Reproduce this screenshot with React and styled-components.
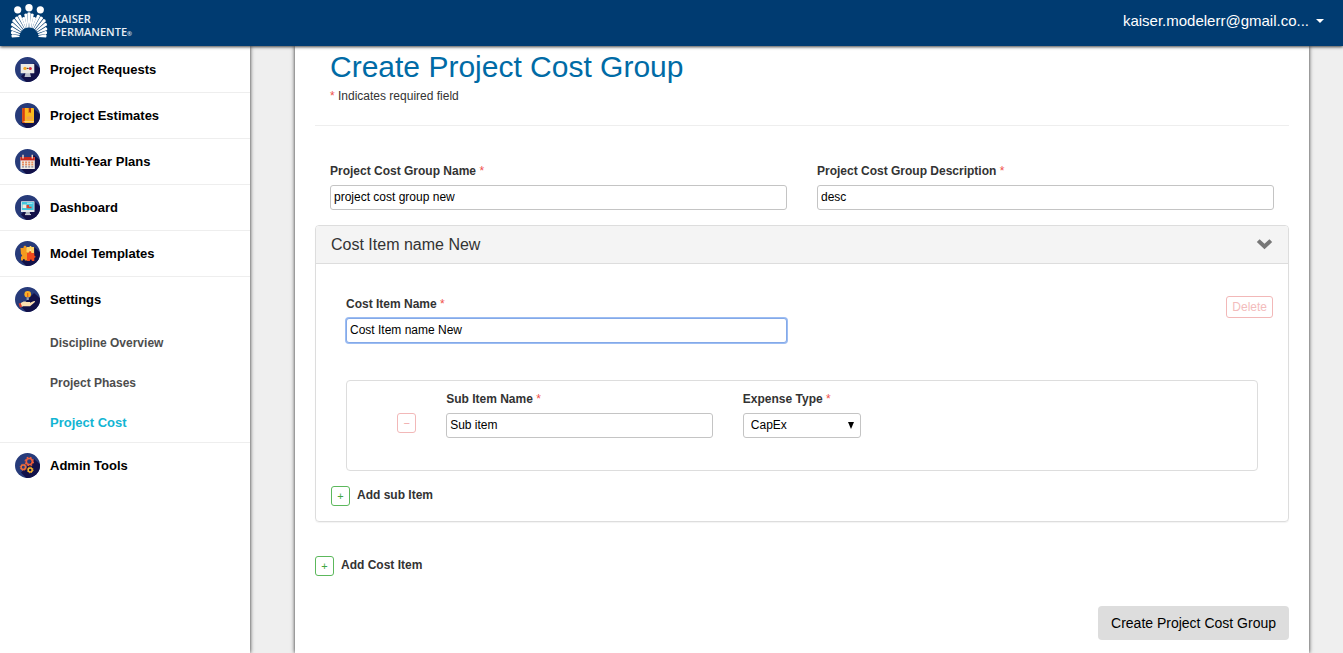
import React, { useState } from "react";
import styled, { createGlobalStyle, css } from "styled-components";

const GlobalStyle = createGlobalStyle`
  *, *::before, *::after { box-sizing: border-box; }
  body {
    margin: 0;
    background: #efefef;
    color: #333;
    font-family: "Liberation Sans", Arial, sans-serif;
    font-size: 12px;
    line-height: 16px;
  }
  button, input, select { font-family: inherit; }
`;

const Page = styled.div`
  display: flex;
  flex-direction: column;
  min-height: 100vh;
`;

const TopBar = styled.header`
  position: relative;
  z-index: 2;
  display: flex;
  align-items: center;
  justify-content: space-between;
  height: 46px;
  padding: 0 19px 0 10px;
  background: #003b71;
  box-shadow: 0 1px 3px rgba(0, 0, 0, 0.75);
`;

const Brand = styled.a`
  display: flex;
  align-items: center;
  gap: 6px;
  color: #e8eff6;
  text-decoration: none;
`;

const BrandName = styled.span`
  display: flex;
  flex-direction: column;
  padding-top: 6px;
  font-family: "Open Sans", sans-serif;
  font-size: 11px;
  font-weight: 600;
  line-height: 13px;
`;

const Registered = styled.small`
  font-size: 6px;
`;

const AccountButton = styled.button`
  display: flex;
  align-items: center;
  gap: 7px;
  padding: 0 0 4px;
  border: 0;
  background: none;
  color: #fff;
  font-size: 15px;
  line-height: 20px;
`;

const Body = styled.div`
  display: flex;
  flex: 1;
`;

const Sidebar = styled.nav`
  position: relative;
  z-index: 1;
  flex: 0 0 250px;
  padding-top: 1px;
  background: #fff;
  box-shadow: 0 0 4px rgba(0, 0, 0, 0.85);
`;

const NavList = styled.ul`
  margin: 0;
  padding: 0;
  list-style: none;
`;

const NavItem = styled.li`
  border-bottom: ${(p) => (p.$last ? "0" : "1px solid #eee")};
`;

const NavLink = styled.a`
  display: flex;
  align-items: center;
  gap: 10px;
  height: 45px;
  padding-left: 15px;
  color: #000;
  font-size: 13px;
  font-weight: bold;
  text-decoration: none;
`;

const SubLink = styled.a`
  display: flex;
  align-items: center;
  height: 40px;
  padding: 2px 0 0 50px;
  color: ${(p) => (p.$active ? "#12b5d3" : "#4d4d4d")};
  font-size: ${(p) => (p.$active ? "13px" : "12px")};
  font-weight: bold;
  text-decoration: none;
`;

const Card = styled.main`
  flex: 1;
  min-width: 0;
  margin: 0 34px 0 45px;
  padding: 4px 20px 13px;
  background: #fff;
  box-shadow: 0 0 4px rgba(0, 0, 0, 0.85);
`;

const Intro = styled.div`
  padding: 0 15px 21px;
  border-bottom: 1px solid #eee;
`;

const Title = styled.h1`
  margin: 0 0 5px;
  color: #006ba6;
  font-size: 30px;
  font-weight: normal;
  line-height: 33px;
`;

const Note = styled.p`
  margin: 0;
`;

const Star = styled.span`
  color: #f0504b;
  font-weight: normal;
`;

const FieldRow = styled.div`
  display: grid;
  grid-template-columns: 1fr 1fr;
  gap: 30px;
  padding: 37px 15px 15px;
`;

const Field = styled.div`
  display: flex;
  flex-direction: column;
  gap: 6px;
  min-width: 0;
`;

const Label = styled.label`
  font-weight: bold;
`;

const control = css`
  width: 100%;
  height: 25px;
  border: 1px solid #c4c4c4;
  border-radius: 3px;
  background: #fff;
  color: #000;
  font-size: 12px;
`;

const TextInput = styled.input`
  ${control}
  padding: 0 3px 2px;
  ${(p) =>
    p.$active &&
    css`
      border-color: #84a9e8;
      box-shadow: 0 0 0 1px #9cbdf3;
    `}
`;

const SelectWrap = styled.div`
  display: grid;
  align-items: center;

  & > * { grid-area: 1 / 1; }
  & > svg {
    justify-self: end;
    margin-right: 7px;
    pointer-events: none;
  }
`;

const Select = styled.select`
  ${control}
  padding: 0 20px 2px 7px;
  appearance: none;
`;

const Panel = styled.section`
  border: 1px solid #ddd;
  border-radius: 4px;
  box-shadow: 0 1px 1px rgba(0, 0, 0, 0.05);
`;

const PanelHeader = styled.header`
  display: flex;
  align-items: center;
  justify-content: space-between;
  padding: 10px 15px;
  border-bottom: 1px solid #ddd;
  border-radius: 3px 3px 0 0;
  background: #f4f4f4;
`;

const PanelTitle = styled.h2`
  margin: 0;
  font-size: 16px;
  font-weight: normal;
  line-height: 17px;
`;

const ToggleButton = styled.button`
  display: flex;
  padding: 0;
  border: 0;
  background: none;
`;

const PanelBody = styled.div`
  padding: 32px 15px 15px;
`;

const CostItem = styled.div`
  display: grid;
  grid-template-columns: 1fr 1fr;
  align-items: start;
  margin-bottom: 37px;

  & > ${Field} { padding: 0 15px; }
`;

const DeleteButton = styled.button`
  justify-self: end;
  height: 22px;
  padding: 0 5px;
  border: 1px solid #f2b8b8;
  border-radius: 3px;
  background: #fff;
  color: #f3bcbc;
  font-size: 12px;
  line-height: 18px;
`;

const SubItem = styled.div`
  display: grid;
  grid-template-columns: 1fr 4fr 2fr 5fr;
  align-items: end;
  margin: 0 15px 15px;
  padding: 10px 10px 32px;
  border: 1px solid #ddd;
  border-radius: 4px;

  & > * { padding: 0 15px; }
`;

const RemoveCell = styled.div`
  display: flex;
  justify-content: flex-end;
  align-self: stretch;
  align-items: flex-end;
  && { padding-bottom: 5px; }
`;

const SquareButton = styled.button`
  display: flex;
  align-items: center;
  justify-content: center;
  flex: none;
  width: 19px;
  height: 20px;
  padding: 0;
  border: 1px solid ${(p) => (p.$remove ? "#f2b8b8" : "#5cb85c")};
  border-radius: 3px;
  background: #fff;
  color: ${(p) => (p.$remove ? "#efa5a5" : "#3fa63f")};
  font-size: 11px;
  line-height: 16px;
`;

const AddRow = styled.div`
  display: flex;
  gap: 7px;
  line-height: 18px;
`;

const Actions = styled.footer`
  display: flex;
  flex-direction: column;
  gap: 30px;
  padding-top: 34px;
`;

const SubmitButton = styled.button`
  align-self: flex-end;
  height: 34px;
  padding: 0 13px;
  border: 0;
  border-radius: 4px;
  background: #ddd;
  color: #000;
  font-size: 14px;
  line-height: 20px;
`;

/* Rays fan out on both sides of the middle: angle and outer radius. */
const RAYS = [
  [0, 25], [8, 24], [16, 21], [24, 24.5], [33, 24.5],
  [43, 24], [53, 22.5], [64, 20.5], [75, 19], [86, 18],
];
const FAN = [...RAYS.slice(1).map(([a, r]) => [-a, r]), ...RAYS];

function FamilyLogo() {
  return (
    <svg width="38" height="38" viewBox="0 0 38 38" fill="#fff" aria-hidden="true">
      <circle cx="7.700" cy="5.800" r="3.600" />
      <circle cx="19" cy="3.700" r="3.700" />
      <circle cx="30.300" cy="5.800" r="3.600" />
      {FAN.map(([angle, radius]) => (
        <path
          key={angle}
          d={`M18.4 23.500 L17.4 ${34 - radius} Q19 ${32.6 - radius} 20.6 ${34 - radius} L19.6 23.500 Z`}
          transform={`rotate(${angle} 19 33)`}
        />
      ))}
    </svg>
  );
}

function Disc({ id, children }) {
  return (
    <svg width="25" height="25" viewBox="0 0 25 25" aria-hidden="true">
      <clipPath id={id}>
        <circle cx="12.5" cy="12.5" r="12.5" />
      </clipPath>
      <g clipPath={`url(#${id})`}>
        <rect width="25" height="25" fill="#273b7a" />
        <path d="M19 6 L27 13 V27 H13 L6 19.5 Z" fill="#121149" />
        {children}
      </g>
    </svg>
  );
}

const RequestsIcon = () => (
  <Disc id="disc-requests">
    <path d="M10.500 16h4.500l1 4H9.500z" fill="#b9bdc9" />
    <rect x="5.700" y="7" width="13.600" height="9.300" rx=".6" fill="#eceae6" />
    <path d="M10.300 11.400h5" stroke="#777" strokeWidth=".7" />
    <circle cx="10" cy="11.400" r="1.700" fill="#f7a823" />
    <circle cx="15.300" cy="11.400" r="1.500" fill="#d5293c" />
    <circle cx="12.700" cy="11.400" r=".6" fill="#333" />
  </Disc>
);

const EstimatesIcon = () => (
  <Disc id="disc-estimates">
    <rect x="7.300" y="5" width="11.700" height="15" rx="1" fill="#fbb81f" />
    <path d="M8.300 5h1.500v15H8.300a1 1 0 0 1-1-1V6a1 1 0 0 1 1-1z" fill="#dc3f12" />
    <path d="M13.700 5h2.300v5.200l-1.150-1.200-1.150 1.200z" fill="#b5360f" />
    <rect x="11.500" y="13.500" width="6" height="3" fill="#f3a24a" />
    <path d="M8.500 18.700h10.500" stroke="#f7dba0" strokeWidth=".9" />
  </Disc>
);

const PlansIcon = () => (
  <Disc id="disc-plans">
    <rect x="5.400" y="8" width="14.400" height="12" fill="#f0ece6" />
    <rect x="5.400" y="8" width="14.400" height="3.400" fill="#c9281c" />
    <path d="M8 5.800v3.700M17.300 5.800v3.700" stroke="#ecd3c2" strokeWidth="1.500" />
    <path d="M7 13.300h11.500M7 15.600h11.500" stroke="#e58d5f" strokeWidth="1.700" strokeDasharray="2 1.100" />
    <path d="M7 17.900h11.500" stroke="#8b8793" strokeWidth="1.200" strokeDasharray="2 1.100" />
  </Disc>
);

const DashboardIcon = () => (
  <Disc id="disc-dashboard">
    <path d="M11 16h3.500l.8 3.500h-5z" fill="#aeb6c2" />
    <rect x="6" y="6.300" width="13.500" height="10.600" rx=".5" fill="#e3eaed" />
    <rect x="6.800" y="7" width="11.900" height="8" fill="#45c7dc" />
    <rect x="7.500" y="9.500" width="4" height="3.500" fill="#f5ead9" />
    <path d="M11.500 10h2.500v1.700h2.500v1.500h-5z" fill="#d8432e" />
    <path d="M12 8.200h5.500" stroke="#d7f4f8" strokeWidth=".9" />
    <path d="M10 19.600h6" stroke="#d7dbe0" />
  </Disc>
);

const TemplatesIcon = () => (
  <Disc id="disc-templates">
    <path d="M5.500 7h3c-.5-3 3.500-3 3 0h2v5h-1.500v7.500h-2.200c.2-2-2-2-1.800 0H6v-4c1.500.3 1.500-2.300 0-2z" fill="#f49b1f" />
    <path d="M11.500 6h3c-.2-1.500 2.200-1.500 2 0h2.600v6h-4l-3.600-1z" fill="#ffd467" />
    <path d="M12 12h2c-.5-2.200 2.800-2.200 2.300 0h3v2.800c1.600-.2 1.600 2.200 0 2V20h-2.500c.2-2-2-2-1.900 0H12z" fill="#f0491c" />
    <path d="M14.500 8.800l1.800-.3-.6 1.400z" fill="#f8f0dc" />
  </Disc>
);

const SettingsIcon = () => (
  <Disc id="disc-settings">
    <circle cx="12.700" cy="7.300" r="3.300" fill="#f9b125" />
    <path d="M12.700 6v4" stroke="#e25b1b" strokeWidth="1.200" />
    <rect x="11.600" y="10.400" width="2.200" height="2.600" fill="#8fa0b3" />
    <path d="M5.500 16.500c2-1.800 4-2.300 6-1.600h3c.8.200.8 1 0 1.200l4.600-2.200c1.200-.2 1.200.9.300 1.500L15 19.200H8l-1.500 1z" fill="#fbdfb3" />
    <path d="M3.600 16.500l2-.5 1.400 3.600-2 1.200z" fill="#d63b2b" />
  </Disc>
);

const AdminIcon = () => (
  <Disc id="disc-admin">
    <g fill="none">
      <circle cx="14.300" cy="8.500" r="3" stroke="#f2603a" strokeWidth="1.600" />
      <circle cx="14.300" cy="8.500" r="4.200" stroke="#f2603a" strokeWidth="1.100" strokeDasharray="1.800 1.500" />
      <circle cx="8.300" cy="14.300" r="2.200" stroke="#f2703a" strokeWidth="1.500" />
      <circle cx="8.300" cy="14.300" r="3.100" stroke="#f2703a" strokeWidth=".9" strokeDasharray="1.300 1.130" />
      <circle cx="15.200" cy="16.900" r="2" stroke="#f7b62c" strokeWidth="1.500" />
      <circle cx="15.200" cy="16.900" r="2.900" stroke="#f7b62c" strokeWidth=".9" strokeDasharray="1.200 1.077" />
    </g>
  </Disc>
);

const NAV = [
  { label: "Project Requests", Icon: RequestsIcon },
  { label: "Project Estimates", Icon: EstimatesIcon },
  { label: "Multi-Year Plans", Icon: PlansIcon },
  { label: "Dashboard", Icon: DashboardIcon },
  { label: "Model Templates", Icon: TemplatesIcon },
  {
    label: "Settings",
    Icon: SettingsIcon,
    children: ["Discipline Overview", "Project Phases", "Project Cost"],
  },
  { label: "Admin Tools", Icon: AdminIcon },
];

function RequiredLabel({ htmlFor, children }) {
  return (
    <Label htmlFor={htmlFor}>
      {children} <Star>*</Star>
    </Label>
  );
}

function TextField({ id, label, value, onChange, active }) {
  return (
    <Field>
      <RequiredLabel htmlFor={id}>{label}</RequiredLabel>
      <TextInput
        id={id}
        type="text"
        required
        $active={active}
        value={value}
        onChange={(e) => onChange(e.target.value)}
      />
    </Field>
  );
}

export default function App() {
  const [groupName, setGroupName] = useState("project cost group new");
  const [description, setDescription] = useState("desc");
  const [itemName, setItemName] = useState("Cost Item name New");
  const [subItem, setSubItem] = useState("Sub item");
  const [expense, setExpense] = useState("CapEx");

  return (
    <Page>
      <GlobalStyle />
      <TopBar>
        <Brand href="#home">
          <FamilyLogo />
          <BrandName>
            <span>KAISER</span>
            <span>
              PERMANENTE<Registered>®</Registered>
            </span>
          </BrandName>
        </Brand>
        <AccountButton type="button">
          kaiser.modelerr@gmail.co...
          <svg width="8" height="4" viewBox="0 0 8 4" aria-hidden="true">
            <path d="M0 0h8L4 4z" fill="#fff" />
          </svg>
        </AccountButton>
      </TopBar>

      <Body>
        <Sidebar>
          <NavList>
            {NAV.map(({ label, Icon, children }, i) => (
              <NavItem key={label} $last={i === NAV.length - 1}>
                <NavLink href="#">
                  <Icon />
                  {label}
                </NavLink>
                {children && (
                  <NavList>
                    {children.map((name) => (
                      <li key={name}>
                        <SubLink href="#" $active={name === "Project Cost"}>
                          {name}
                        </SubLink>
                      </li>
                    ))}
                  </NavList>
                )}
              </NavItem>
            ))}
          </NavList>
        </Sidebar>

        <Card>
          <Intro>
            <Title>Create Project Cost Group</Title>
            <Note>
              <Star>*</Star> Indicates required field
            </Note>
          </Intro>

          <form onSubmit={(e) => e.preventDefault()}>
            <FieldRow>
              <TextField
                id="group-name"
                label="Project Cost Group Name"
                value={groupName}
                onChange={setGroupName}
              />
              <TextField
                id="group-description"
                label="Project Cost Group Description"
                value={description}
                onChange={setDescription}
              />
            </FieldRow>

            <Panel>
              <PanelHeader>
                <PanelTitle>{itemName}</PanelTitle>
                <ToggleButton type="button" aria-label="Collapse cost item">
                  <svg width="17" height="11" viewBox="0 0 17 11" aria-hidden="true">
                    <path d="M3.600.3L8.500 4.700 13.400.3 16.200 3 8.500 10.300.8 3z" fill="#777" />
                  </svg>
                </ToggleButton>
              </PanelHeader>
              <PanelBody>
                <CostItem>
                  <TextField
                    id="cost-item-name"
                    label="Cost Item Name"
                    value={itemName}
                    onChange={setItemName}
                    active
                  />
                  <DeleteButton type="button" disabled>
                    Delete
                  </DeleteButton>
                </CostItem>

                <SubItem>
                  <RemoveCell>
                    <SquareButton type="button" $remove disabled aria-label="Remove sub item">
                      −
                    </SquareButton>
                  </RemoveCell>
                  <TextField
                    id="sub-item-name"
                    label="Sub Item Name"
                    value={subItem}
                    onChange={setSubItem}
                  />
                  <Field>
                    <RequiredLabel htmlFor="expense-type">Expense Type</RequiredLabel>
                    <SelectWrap>
                      <Select
                        id="expense-type"
                        value={expense}
                        onChange={(e) => setExpense(e.target.value)}
                      >
                        <option>CapEx</option>
                        <option>OpEx</option>
                      </Select>
                      <svg width="6" height="7" viewBox="0 0 6 7" aria-hidden="true">
                        <path d="M0 0h6L3 7z" fill="#000" />
                      </svg>
                    </SelectWrap>
                  </Field>
                </SubItem>

                <AddRow>
                  <SquareButton type="button" id="add-sub-item">
                    +
                  </SquareButton>
                  <Label htmlFor="add-sub-item">Add sub Item</Label>
                </AddRow>
              </PanelBody>
            </Panel>

            <Actions>
              <AddRow>
                <SquareButton type="button" id="add-cost-item">
                  +
                </SquareButton>
                <Label htmlFor="add-cost-item">Add Cost Item</Label>
              </AddRow>
              <SubmitButton type="submit">Create Project Cost Group</SubmitButton>
            </Actions>
          </form>
        </Card>
      </Body>
    </Page>
  );
}
